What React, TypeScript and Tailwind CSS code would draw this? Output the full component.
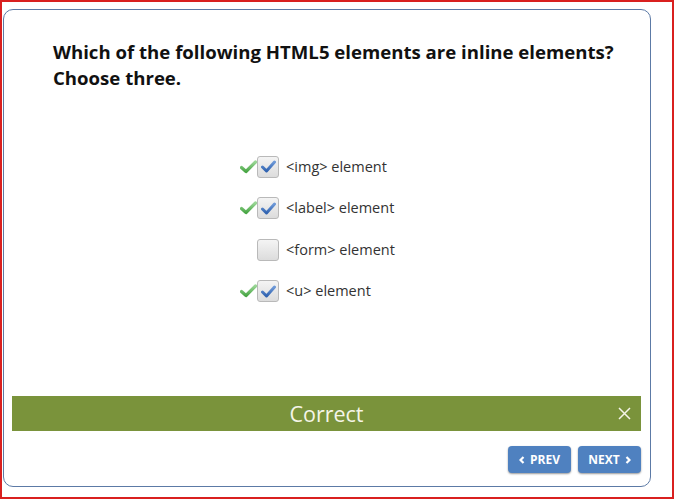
import type { ReactNode } from 'react';

const font = { fontFamily: '"Open Sans", "Noto Sans", sans-serif' };

const GreenCheck = () => (
    <svg width="17" height="14" viewBox="0 0 17 14">
        <defs>
            <linearGradient id="gchk" x1="0" y1="0" x2="0" y2="1">
                <stop offset="0" stopColor="#9ad696" />
                <stop offset="1" stopColor="#4aa746" />
            </linearGradient>
        </defs>
        <path d="M1.5 7.5 L6 11.5 L15.5 2" fill="none" stroke="url(#gchk)" strokeWidth="3.2" strokeLinecap="round" strokeLinejoin="round" />
    </svg>
);

const BlueCheck = () => (
    <svg width="15" height="13" viewBox="0 0 15 13">
        <defs>
            <linearGradient id="bchk" x1="0" y1="0" x2="0" y2="1">
                <stop offset="0" stopColor="#6f9ad8" />
                <stop offset="1" stopColor="#2f62b0" />
            </linearGradient>
        </defs>
        <path d="M1.5 7 L5.5 11 L13.5 2" fill="none" stroke="url(#bchk)" strokeWidth="3" strokeLinecap="round" strokeLinejoin="round" />
    </svg>
);

interface OptionProps {
    checked: boolean;
    correct: boolean;
    children: ReactNode;
}

const Option = ({ checked, correct, children }: OptionProps) => (
    <div className="flex items-center h-[41.5px]">
        <div className="w-[17px] flex justify-start">{correct && <GreenCheck />}</div>
        <div className="w-[22px] h-[22px] rounded-[3px] border border-[#b9b9b9] bg-gradient-to-b from-[#f4f4f4] to-[#dcdcdc] flex items-center justify-center">
            {checked && <BlueCheck />}
        </div>
        <span className="ml-[7px] text-[14.5px] text-[#333]">{children}</span>
    </div>
);

export default function App() {
    return (
        <div className="w-[674px] h-[499px] border-2 border-[#d9201f] bg-white" style={font}>
            <div className="ml-[1px] mt-[7px] w-[648px] h-[478px] border border-[#5c7aa6] rounded-[10px] flex flex-col">
                <h1 className="pl-[49px] pt-[29px] text-[18.6px] leading-[26px] font-bold text-[#111]">
                    Which of the following HTML5 elements are inline elements?
                    <br />
                    Choose three.
                </h1>

                <div className="mt-[55px] pl-[236px] flex flex-col">
                    <Option checked correct>&lt;img&gt; element</Option>
                    <Option checked correct>&lt;label&gt; element</Option>
                    <Option checked={false} correct={false}>&lt;form&gt; element</Option>
                    <Option checked correct>&lt;u&gt; element</Option>
                </div>

                <div className="mt-[84px] ml-[8px] w-[629px] h-[35px] bg-[#7a933b] relative flex items-center justify-center">
                    <span className="text-[21.5px] leading-none text-[#f5f5e8]">Correct</span>
                    <svg className="absolute right-[10px] top-[11px]" width="13" height="13" viewBox="0 0 13 13">
                        <path d="M1 1 L12 12 M12 1 L1 12" stroke="#f5f5e8" strokeWidth="1.5" />
                    </svg>
                </div>

                <div className="mt-[15px] pr-[9px] flex justify-end gap-[7px]">
                    <button className="w-[63px] h-[27px] rounded-[4px] bg-[#4f81c0] shadow-[0_1px_2px_rgba(0,0,0,0.4)] text-white text-[12px] font-bold flex items-center justify-center gap-[5px]">
                        <svg width="6" height="8" viewBox="0 0 6 8">
                            <path d="M4.5 1 L1.5 4 L4.5 7" fill="none" stroke="white" strokeWidth="2.2" />
                        </svg>
                        PREV
                    </button>
                    <button className="w-[63px] h-[27px] rounded-[4px] bg-[#4f81c0] shadow-[0_1px_2px_rgba(0,0,0,0.4)] text-white text-[12px] font-bold flex items-center justify-center gap-[5px]">
                        NEXT
                        <svg width="6" height="8" viewBox="0 0 6 8">
                            <path d="M1.5 1 L4.5 4 L1.5 7" fill="none" stroke="white" strokeWidth="2.2" />
                        </svg>
                    </button>
                </div>
            </div>
        </div>
    );
}
